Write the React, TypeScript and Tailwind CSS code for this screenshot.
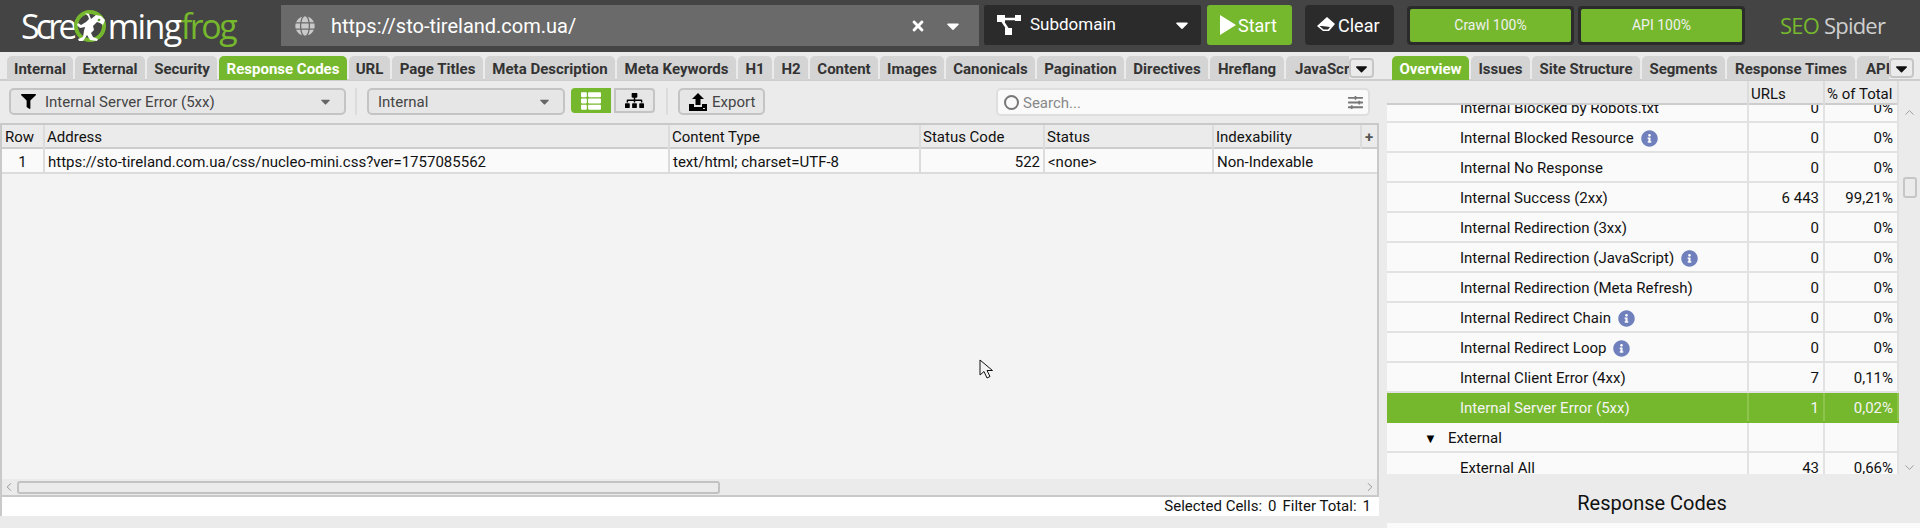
import { FaCaretDown, FaFilter, FaGlobe, FaInfoCircle, FaSitemap, FaSlidersH, FaThList, FaTimes } from "react-icons/fa"
import { ChevronDown, ChevronLeft, ChevronRight, ChevronUp } from "lucide-react"

const leftTabs = [
  { label: "Internal", w: "w-[66px]" },
  { label: "External", w: "w-[70px]" },
  { label: "Security", w: "w-[70px]" },
  { label: "Response Codes", w: "w-[128px]", active: true },
  { label: "URL", w: "w-[41px]" },
  { label: "Page Titles", w: "w-[91px]" },
  { label: "Meta Description", w: "w-[130px]" },
  { label: "Meta Keywords", w: "w-[119px]" },
  { label: "H1", w: "w-[34px]" },
  { label: "H2", w: "w-[34px]" },
  { label: "Content", w: "w-[68px]" },
  { label: "Images", w: "w-[64px]" },
  { label: "Canonicals", w: "w-[89px]" },
  { label: "Pagination", w: "w-[87px]" },
  { label: "Directives", w: "w-[82px]" },
  { label: "Hreflang", w: "w-[74px]" },
  { label: "JavaScript", w: "w-[90px]" },
]

const rightTabs = [
  { label: "Overview", w: "w-[77px]", active: true },
  { label: "Issues", w: "w-[59px]" },
  { label: "Site Structure", w: "w-[108px]" },
  { label: "Segments", w: "w-[83px]" },
  { label: "Response Times", w: "w-[128px]" },
  { label: "API", w: "w-[42px]" },
]

const overviewRows = [
  { label: "Internal Blocked by Robots.txt", urls: "0", pct: "0%" },
  { label: "Internal Blocked Resource", urls: "0", pct: "0%", info: true },
  { label: "Internal No Response", urls: "0", pct: "0%" },
  { label: "Internal Success (2xx)", urls: "6 443", pct: "99,21%" },
  { label: "Internal Redirection (3xx)", urls: "0", pct: "0%" },
  { label: "Internal Redirection (JavaScript)", urls: "0", pct: "0%", info: true },
  { label: "Internal Redirection (Meta Refresh)", urls: "0", pct: "0%" },
  { label: "Internal Redirect Chain", urls: "0", pct: "0%", info: true },
  { label: "Internal Redirect Loop", urls: "0", pct: "0%", info: true },
  { label: "Internal Client Error (4xx)", urls: "7", pct: "0,11%" },
  { label: "Internal Server Error (5xx)", urls: "1", pct: "0,02%", selected: true },
  { label: "External", urls: "", pct: "", group: true },
  { label: "External All", urls: "43", pct: "0,66%" },
]

function FrogMark() {
  return (
    <svg width="34" height="38" viewBox="0 0 34 38" className="shrink-0">
      <circle cx="16" cy="19" r="14" fill="none" stroke="#76b82d" strokeWidth="4" />
      <path
        d="M11 6l4 1 2 5 5-4 5 1 4 4-2 5-3-2-3-1-4 4 1 4-3 3 2 4 5 2-1 2-7-1-3-5-4 6H5l-1-2 5-2 1-6 1-4-5 1-3-3 1-2 3 2 5-3 3-3-1-3-3-3z"
        fill="#fff"
      />
      <circle cx="25" cy="13" r="1.3" fill="#5c9a2a" />
    </svg>
  )
}

function SubdomainIcon() {
  return (
    <svg width="24" height="20" viewBox="0 0 24 20" className="shrink-0">
      <path d="M4 4h16M4 4l8 12" stroke="#fff" strokeWidth="2.5" fill="none" />
      <rect x="0" y="0" width="8" height="7" fill="#fff" />
      <rect x="18" y="0" width="6" height="6" fill="#fff" />
      <rect x="8" y="13" width="7" height="7" fill="#fff" />
    </svg>
  )
}

function ExportIcon() {
  return (
    <svg width="18" height="18" viewBox="0 0 18 18" className="shrink-0">
      <path d="M9 0l6 6h-3.5v6h-5V6H3z" fill="#000" />
      <path d="M0 11h5v3h8v-3h5v7H0z" fill="#000" />
      <rect x="14" y="15" width="2" height="1" fill="#ddd" />
    </svg>
  )
}

function EraserIcon() {
  return (
    <svg width="18" height="16" viewBox="0 0 18 16" className="shrink-0">
      <path d="M10 0l8 7-6 7H6l-6-5z" fill="#fff" />
      <path d="M5 9l-2.5 0 4 3.5h4.5l2-2.5z" fill="#2b2b2b" />
    </svg>
  )
}

function Tab({ label, w, active }: { label: string; w: string; active?: boolean }) {
  return (
    <div
      className={`${w} h-[24px] shrink-0 rounded-t-[5px] whitespace-nowrap flex justify-center items-center pt-[2px] text-[15px] font-bold ${
        active ? "bg-[#76b82d] text-white" : "bg-[#d4d4d4] text-[#333]"
      }`}
    >
      {label}
    </div>
  )
}

function TabMenu() {
  return (
    <div className="w-[25px] h-[20px] shrink-0 rounded-[4px] bg-[#ebebeb] border-2 border-[#c6c6c6] flex items-center justify-center text-[#111]">
      <FaCaretDown size={19} />
    </div>
  )
}

function OverviewRow({ row }: { row: (typeof overviewRows)[number] }) {
  return (
    <div
      className={`h-[30px] grid grid-cols-[360px_76px_76px] border-b-2 text-[15px] ${
        row.selected ? "bg-[#76b82d] text-[#f4f4f4] border-[#76b82d]" : "bg-[#fafafa] text-[#111] border-[#e2e2e2]"
      }`}
    >
      <div className={`flex items-center gap-[7px] pt-[3px] ${row.group ? "pl-[37px]" : "pl-[73px]"}`}>
        {row.group && <span className="text-[13px] mr-[4px] leading-none text-black">▼</span>}
        <span>{row.label}</span>
        {row.info && <FaInfoCircle size={17} className="text-[#6f80bd]" />}
      </div>
      <div className={`flex items-center justify-end pt-[3px] pr-[4px] border-l-2 ${row.selected ? "border-[#8cc44c]" : "border-[#e2e2e2]"}`}>{row.urls}</div>
      <div className={`flex items-center justify-end pt-[3px] pr-[4px] border-l-2 border-r-2 ${row.selected ? "border-[#8cc44c]" : "border-[#e2e2e2]"}`}>{row.pct}</div>
    </div>
  )
}

export default function App() {
  return (
    <div className="relative w-[1920px] h-[528px] overflow-hidden bg-[#ebebeb] font-['Roboto',sans-serif] text-[#222]">
      {/* top bar */}
      <header className="h-[52px] bg-[#444444] flex items-start pt-[5px] text-white">
        <div className="w-[281px] h-[41px] shrink-0 pl-[21px] flex items-center font-['Open_Sans',sans-serif] text-[34px] leading-none font-normal">
          <span className="tracking-[-3.8px]">Scre</span>
          <FrogMark />
          <span className="tracking-[-1.6px]">ming</span>
          <span className="tracking-[-2.4px] text-[#76b82d]">frog</span>
        </div>

        <div className="w-[698px] h-[41px] shrink-0 bg-[#6a6a6a] flex items-center pl-[14px] pr-[16px]">
          <FaGlobe size={20} className="text-[#c9c9c9]" />
          <span className="ml-[16px] text-[20px]">https://sto-tireland.com.ua/</span>
          <FaTimes size={16} className="ml-auto" />
          <FaCaretDown size={20} className="ml-[17px]" />
        </div>

        <div className="ml-[5px] w-[217px] h-[40px] shrink-0 bg-[#2b2b2b] rounded-[2px] flex items-center pl-[13px] pr-[9px]">
          <SubdomainIcon />
          <span className="ml-[9px] text-[17px]">Subdomain</span>
          <FaCaretDown size={20} className="ml-auto" />
        </div>

        <div className="ml-[6px] w-[85px] h-[40px] shrink-0 bg-[#76b82d] rounded-[3px] flex items-center pl-[13px] gap-[2px] text-[18px]">
          <svg width="16" height="20" viewBox="0 0 16 20" className="shrink-0">
            <path d="M0 0l16 10L0 20z" fill="#fff" />
          </svg>
          <span>Start</span>
        </div>

        <div className="ml-[13px] w-[89px] h-[40px] shrink-0 bg-[#2b2b2b] rounded-[4px] flex items-center pl-[12px] gap-[3px] text-[18px]">
          <EraserIcon />
          <span>Clear</span>
        </div>

        <div className="ml-[13px] mt-[1px] w-[167px] h-[39px] shrink-0 bg-[#2b2b2b] rounded-[4px] p-[3px]">
          <div className="h-full bg-[#76b82d] rounded-[2px] flex items-center justify-center text-[14px] text-[#f0f0f0]">Crawl 100%</div>
        </div>
        <div className="ml-[4px] mt-[1px] w-[167px] h-[39px] shrink-0 bg-[#2b2b2b] rounded-[4px] p-[3px]">
          <div className="h-full bg-[#76b82d] rounded-[2px] flex items-center justify-center text-[14px] text-[#f0f0f0]">API 100%</div>
        </div>

        <div className="ml-[35px] h-[41px] flex items-center font-['Open_Sans',sans-serif] text-[22px] tracking-[-0.8px] gap-[5px]">
          <span className="text-[#76b82d]">SEO</span>
          <span className="text-[#cfcfcf]">Spider</span>
        </div>
      </header>

      <div className="flex h-[476px]">
        {/* left pane */}
        <div className="w-[1379px] shrink-0 flex flex-col">
          <div className="h-[29px] pt-[4px] pl-[7px] flex items-start border-b-2 border-[#cdcdcd]">
            <div className="w-[1342px] shrink-0 flex gap-[2px] overflow-hidden">
              {leftTabs.map((t) => (
                <Tab key={t.label} {...t} />
              ))}
            </div>
            <div className="pt-[2px]">
              <TabMenu />
            </div>
          </div>

          {/* filter toolbar */}
          <div className="h-[42px] pl-[9px] pt-[7px] flex items-start text-[15px] text-[#444]">
            <div className="w-[337px] h-[27px] rounded-[5px] border-2 border-[#c4c4c4] bg-[#e6e6e6] flex items-center pl-[10px] pr-[11px]">
              <FaFilter size={15} className="text-black" />
              <span className="ml-[9px] pt-[1px]">Internal Server Error (5xx)</span>
              <FaCaretDown size={15} className="ml-auto text-[#666]" />
            </div>
            <div className="ml-[9px] w-[2px] h-[27px] bg-[#dcdcdc]" />
            <div className="ml-[10px] w-[198px] h-[27px] rounded-[5px] border-2 border-[#c4c4c4] bg-[#e6e6e6] flex items-center pl-[9px] pr-[11px]">
              <span className="pt-[1px]">Internal</span>
              <FaCaretDown size={15} className="ml-auto text-[#666]" />
            </div>
            <div className="ml-[6px] w-[40px] h-[25px] rounded-l-[4px] bg-[#76b82d] text-white flex items-center justify-center">
              <FaThList size={20} />
            </div>
            <div className="ml-[3px] w-[41px] h-[25px] rounded-r-[4px] border-2 border-[#c4c4c4] bg-[#e6e6e6] text-black flex items-center justify-center">
              <FaSitemap size={19} />
            </div>
            <div className="ml-[11px] w-[2px] h-[27px] bg-[#dcdcdc]" />
            <div className="ml-[10px] w-[87px] h-[27px] rounded-[5px] border-2 border-[#c4c4c4] bg-[#e6e6e6] flex items-center pl-[9px] gap-[5px]">
              <ExportIcon />
              <span className="pt-[1px]">Export</span>
            </div>
            <div className="ml-[231px] w-[374px] h-[28px] rounded-[5px] border-2 border-[#dedede] bg-[#fafafa] flex items-center pl-[6px] pr-[5px] text-[#888]">
              <span className="w-[15px] h-[15px] rounded-full border-2 border-[#777]" />
              <span className="ml-[4px] pt-[2px]">Search...</span>
              <FaSlidersH size={15} className="ml-auto text-[#777]" />
            </div>
          </div>

          {/* results table */}
          <div className="flex-1 flex flex-col border-l-2 border-r-2 border-[#c9c9c9] border-t-2 min-h-0">
            <div className="h-[24px] grid grid-cols-[41px_625px_251px_124px_169px_148px_16px] border-b-2 border-[#cdcdcd] bg-[#ebebeb] text-[15px] text-[#111]">
              <div className="pl-[3px] pt-[1px] flex items-center">Row</div>
              <div className="pl-[2px] pt-[1px] flex items-center border-l-2 border-[#dcdcdc]">Address</div>
              <div className="pl-[2px] pt-[1px] flex items-center border-l-2 border-[#dcdcdc]">Content Type</div>
              <div className="pl-[2px] pt-[1px] flex items-center border-l-2 border-[#dcdcdc]">Status Code</div>
              <div className="pl-[2px] pt-[1px] flex items-center border-l-2 border-[#dcdcdc]">Status</div>
              <div className="pl-[2px] pt-[1px] flex items-center border-l-2 border-[#dcdcdc]">Indexability</div>
              <div className="flex items-center justify-center border-l-2 border-[#dcdcdc] font-bold text-[#555]">+</div>
            </div>
            <div className="h-[25px] grid grid-cols-[41px_625px_251px_124px_169px_148px_16px] border-b-2 border-[#dcdcdc] bg-[#fafafa] text-[15px] text-[#111]">
              <div className="pt-[2px] flex items-center justify-center">1</div>
              <div className="pl-[3px] pt-[2px] flex items-center border-l-2 border-[#dcdcdc]">https://sto-tireland.com.ua/css/nucleo-mini.css?ver=1757085562</div>
              <div className="pl-[3px] pt-[2px] flex items-center border-l-2 border-[#dcdcdc]">text/html; charset=UTF-8</div>
              <div className="pr-[3px] pt-[2px] flex items-center justify-end border-l-2 border-[#dcdcdc]">522</div>
              <div className="pl-[3px] pt-[2px] flex items-center border-l-2 border-[#dcdcdc]">&lt;none&gt;</div>
              <div className="pl-[3px] pt-[2px] flex items-center border-l-2 border-[#dcdcdc]">Non-Indexable</div>
              <div />
            </div>
            <div className="flex-1 bg-[#f3f3f3]" />
            <div className="h-[18px] bg-[#ebebeb] border-b-2 border-[#c9c9c9] flex items-center text-[#8a8a8a]">
              <ChevronLeft size={14} strokeWidth={1.5} />
              <div className="ml-[1px] w-[703px] h-[13px] rounded-[3px] border-2 border-[#c2c2c2] bg-[#ebebeb]" />
              <ChevronRight size={14} strokeWidth={1.5} className="ml-auto" />
            </div>
          </div>
          <div className="h-[19px] bg-white flex items-center justify-end pr-[8px] gap-[6px] text-[15px] text-[#111] border-l-2 border-[#c9c9c9]">
            <span className="flex gap-[6px]"><span>Selected Cells:</span><span>0</span></span>
            <span className="flex gap-[6px]"><span>Filter Total:</span><span>1</span></span>
          </div>
          <div className="h-[12px]" />
        </div>

        {/* right pane */}
        <div className="flex-1 flex flex-col min-w-0">
          <div className="h-[29px] pt-[4px] pl-[13px] flex items-start border-b-2 border-[#cdcdcd]">
            <div className="w-[497px] flex gap-[2px] overflow-hidden shrink-0">
              {rightTabs.map((t) => (
                <Tab key={t.label} {...t} />
              ))}
            </div>
            <div className="pt-[2px]">
              <TabMenu />
            </div>
          </div>
          <div className="pl-[8px]">
            <div className="h-[24px] w-[512px] grid grid-cols-[360px_76px_76px] border-b-2 border-[#cdcdcd] text-[15px] text-[#111] bg-[#ebebeb]">
              <div />
              <div className="pl-[2px] pt-[2px] flex items-center border-l-2 border-[#dcdcdc]">URLs</div>
              <div className="pl-[2px] pt-[2px] flex items-center border-l-2 border-r-2 border-[#dcdcdc]">% of Total</div>
            </div>
          </div>
          <div className="pl-[8px] h-[369px] flex overflow-hidden">
            <div className="w-[512px] shrink-0 overflow-hidden">
              <div className="-mt-[12px]">
                {overviewRows.map((r) => (
                  <OverviewRow key={r.label} row={r} />
                ))}
              </div>
            </div>
            <div className="flex-1 flex flex-col items-center text-[#9a9a9a]">
              <ChevronUp size={15} strokeWidth={1.5} />
              <div className="mt-[57px] w-[14px] h-[21px] rounded-[3px] border-2 border-[#c6c6c6]" />
              <ChevronDown size={15} strokeWidth={1.5} className="mt-auto mb-[-1px]" />
            </div>
          </div>
          <div className="h-[49px] flex items-center justify-center text-[20px] text-[#111] pl-[5px] pt-[9px]">Response Codes</div>
          <div className="ml-[8px] h-[5px] bg-[#fafafa]" />
        </div>
      </div>

      {/* mouse pointer */}
      <svg width="14" height="21" viewBox="0 0 14 21" className="absolute left-[979px] top-[359px]">
        <path d="M1 1v15l4-3.5 3 6.5 3-1.5-3-6h5.5z" fill="#f3f3f3" stroke="#111" strokeWidth="1" />
      </svg>
    </div>
  )
}
